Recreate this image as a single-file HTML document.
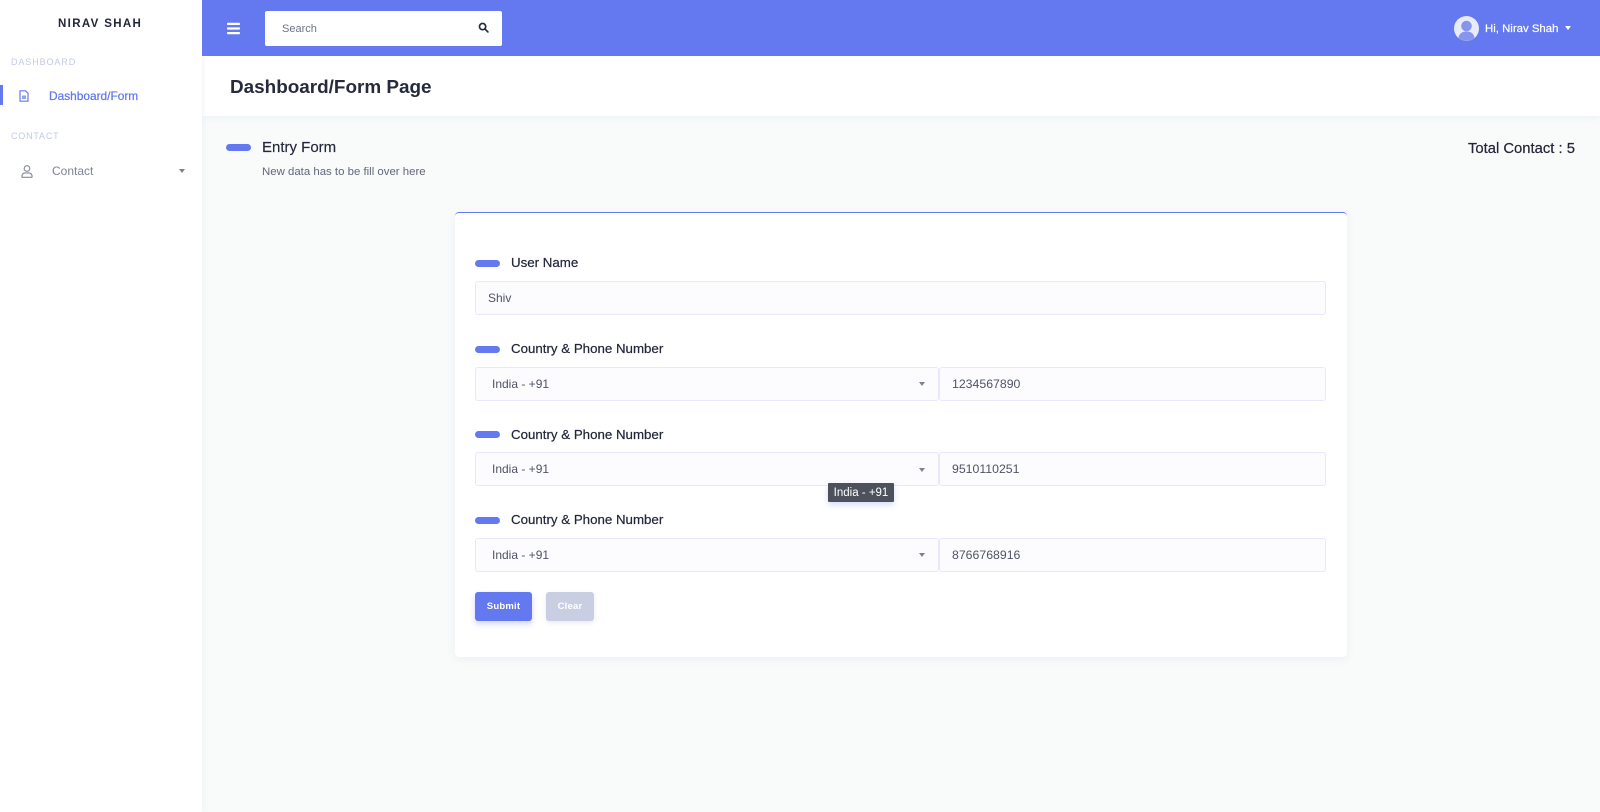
<!DOCTYPE html>
<html lang="en"><head><meta charset="utf-8"><title>Dashboard/Form Page</title>
<style>
*{box-sizing:border-box}
html,body{margin:0;padding:0;width:1600px;height:812px;overflow:hidden;background:#fff}
body{font-family:"Liberation Sans",sans-serif;color:#22263a}
#w{position:absolute;left:0;top:0;width:1600px;height:812px;overflow:hidden;filter:blur(.3px)}
.a{position:absolute;white-space:nowrap}
.pill{position:absolute;width:25px;height:7px;border-radius:4px;background:#6478ef}
.lab{position:absolute;white-space:nowrap;font-size:13.3px;line-height:16px;color:#22263a;-webkit-text-stroke:.2px #22263a}
.inp{position:absolute;height:34px;background:#fcfcff;border:1.5px solid #e7e9fa;border-radius:3px;font-size:12px;line-height:33px;color:#4f5364;white-space:nowrap}
.num{font-size:12.300px}
.car{position:absolute;width:0;height:0;border-left:3px solid transparent;border-right:3px solid transparent;border-top:4px solid #7d8290}
</style></head><body><div id="w">
<div class="a" style="left:0;top:116px;width:1600px;height:696px;background:#f9fbfa"></div>
<div class="a" style="left:202px;top:56px;width:1398px;height:60px;background:#fff;box-shadow:0 2px 6px rgba(220,225,240,.3)"></div>
<div class="a" style="left:0;top:0;width:202px;height:812px;background:#fff;box-shadow:1px 0 4px rgba(225,230,240,.5)"></div>
<div class="a" style="left:202px;top:0;width:1398px;height:56px;background:#6478ef"></div>

<div class="a" style="left:58px;top:16px;font-size:11.5px;line-height:16px;font-weight:bold;letter-spacing:1.35px;color:#22263a">NIRAV SHAH</div>
<div class="a" style="left:11px;top:54.500px;font-size:9px;line-height:14px;letter-spacing:.9px;color:#c3c9e6">DASHBOARD</div>
<div class="a" style="left:0;top:85px;width:2.5px;height:20px;background:#6478ef"></div>
<svg class="a" style="left:19px;top:90px" width="10" height="12" viewBox="0 0 10 12" fill="none" stroke="#6478ef" stroke-width="1.2"><path d="M1 .8h5.500l2.500 2.500V11.200H1z"/><rect x="3" y="5.500" width="4" height="3.500" fill="#6478ef" opacity=".7" stroke="none"/></svg>
<div class="a" style="left:49px;top:88px;font-size:11.9px;line-height:16px;color:#6478ef;-webkit-text-stroke:.25px #6478ef">Dashboard/Form</div>
<div class="a" style="left:11px;top:129px;font-size:9px;line-height:14px;letter-spacing:.8px;color:#c3c9e6">CONTACT</div>
<svg class="a" style="left:21px;top:165px" width="12" height="13" viewBox="0 0 12 13" fill="none" stroke="#858a9b" stroke-width="1.1"><circle cx="6" cy="3.500" r="2.800"/><path d="M1 12.300c-.4-2.600.9-4.400 3.200-4.400h3.600c2.300 0 3.600 1.800 3.200 4.400z" stroke-linejoin="round"/></svg>
<div class="a" style="left:52px;top:163px;font-size:12px;line-height:16px;color:#7f8495">Contact</div>
<div class="car" style="left:179px;top:169px"></div>

<svg class="a" style="left:227px;top:22px" width="13" height="13" viewBox="0 0 13 13" fill="#fff"><rect y=".8" width="13" height="2.200" rx=".8"/><rect y="5.400" width="13" height="2.200" rx=".8"/><rect y="10" width="13" height="2.200" rx=".8"/></svg>
<div class="a" style="left:265px;top:11px;width:237px;height:35px;background:#fff;border-radius:2px"></div>
<div class="a" style="left:282px;top:20.500px;font-size:11px;line-height:16px;color:#6f7485">Search</div>
<svg class="a" style="left:478px;top:22px" width="11" height="11" viewBox="0 0 12 12" fill="none" stroke="#22263a" stroke-width="1.800"><circle cx="5" cy="5" r="3.400"/><path d="M7.600 7.600L10.800 10.800" stroke-linecap="round"/></svg>

<svg class="a" style="left:1454px;top:16px" width="25" height="25" viewBox="0 0 25 25"><circle cx="12.500" cy="12.500" r="12.500" fill="#e8ebfa"/><circle cx="12.500" cy="10" r="5.300" fill="#8795ef"/><path d="M4.500 22c.5-4.500 3.500-6.500 8-6.500s7.500 2 8 6.500a12.500 12.500 0 0 1-16 0z" fill="#8795ef"/></svg>
<div class="a" style="left:1485px;top:20.500px;font-size:11.400px;line-height:16px;color:#fff;-webkit-text-stroke:.2px #fff">Hi, Nirav Shah</div>
<div class="car" style="left:1564.500px;top:26px;border-top-color:#fff"></div>

<div class="a" style="left:230px;top:75.500px;font-size:18.900px;line-height:24px;font-weight:bold;color:#262a3c">Dashboard/Form Page</div>

<div class="pill" style="left:226px;top:144px"></div>
<div class="a" style="left:262px;top:139px;font-size:15px;line-height:18px;color:#22263a;-webkit-text-stroke:.15px #22263a">Entry Form</div>
<div class="a" style="left:262px;top:163.500px;font-size:11.420px;line-height:16px;color:#626779">New data has to be fill over here</div>
<div class="a" style="left:1468px;top:139.500px;font-size:14.800px;line-height:18px;color:#22263a;-webkit-text-stroke:.2px #22263a">Total Contact : 5</div>

<div class="a" style="left:455px;top:212px;width:892px;height:445px;background:#fff;border-top:1.500px solid #6478ef;border-radius:4px;box-shadow:0 2px 8px rgba(215,220,235,.4)"></div>

<div class="pill" style="left:475px;top:260px"></div>
<div class="lab" style="left:511px;top:255px">User Name</div>
<div class="inp" style="left:475px;top:281px;width:851px;padding-left:12px">Shiv</div>

<div class="pill" style="left:475px;top:346px"></div>
<div class="lab" style="left:511px;top:340.500px">Country &amp; Phone Number</div>
<div class="inp" style="left:475px;top:367px;width:464px;padding-left:16px">India - +91</div>
<div class="car" style="left:919px;top:382px"></div>
<div class="inp num" style="left:939px;top:367px;width:387px;padding-left:12px">1234567890</div>

<div class="pill" style="left:475px;top:431px"></div>
<div class="lab" style="left:511px;top:426.500px">Country &amp; Phone Number</div>
<div class="inp" style="left:475px;top:452px;width:464px;padding-left:16px">India - +91</div>
<div class="car" style="left:919px;top:468px"></div>
<div class="inp num" style="left:939px;top:452px;width:387px;padding-left:12px">9510110251</div>

<div class="pill" style="left:475px;top:517px"></div>
<div class="lab" style="left:511px;top:512px">Country &amp; Phone Number</div>
<div class="inp" style="left:475px;top:538px;width:464px;padding-left:16px">India - +91</div>
<div class="car" style="left:919px;top:553px"></div>
<div class="inp num" style="left:939px;top:538px;width:387px;padding-left:12px">8766768916</div>

<div class="a" style="left:828px;top:483px;width:66px;height:19px;background:#4d515c;border-radius:1px;box-shadow:0 3px 6px rgba(100,120,239,.25);color:#fff;font-size:11.500px;line-height:20px;text-align:center">India - +91</div>

<div class="a" style="left:475px;top:592px;width:57px;height:29px;background:#6478ef;border-radius:3px;box-shadow:0 3px 6px rgba(100,120,239,.3);color:#fff;font-size:9.500px;font-weight:bold;line-height:30px;text-align:center;letter-spacing:.2px">Submit</div>
<div class="a" style="left:546px;top:592px;width:48px;height:29px;background:#c9cee2;border-radius:3px;box-shadow:0 2px 5px rgba(180,190,220,.3);color:#fff;font-size:9.500px;font-weight:bold;line-height:30px;text-align:center;letter-spacing:.2px">Clear</div>
</div></body></html>
